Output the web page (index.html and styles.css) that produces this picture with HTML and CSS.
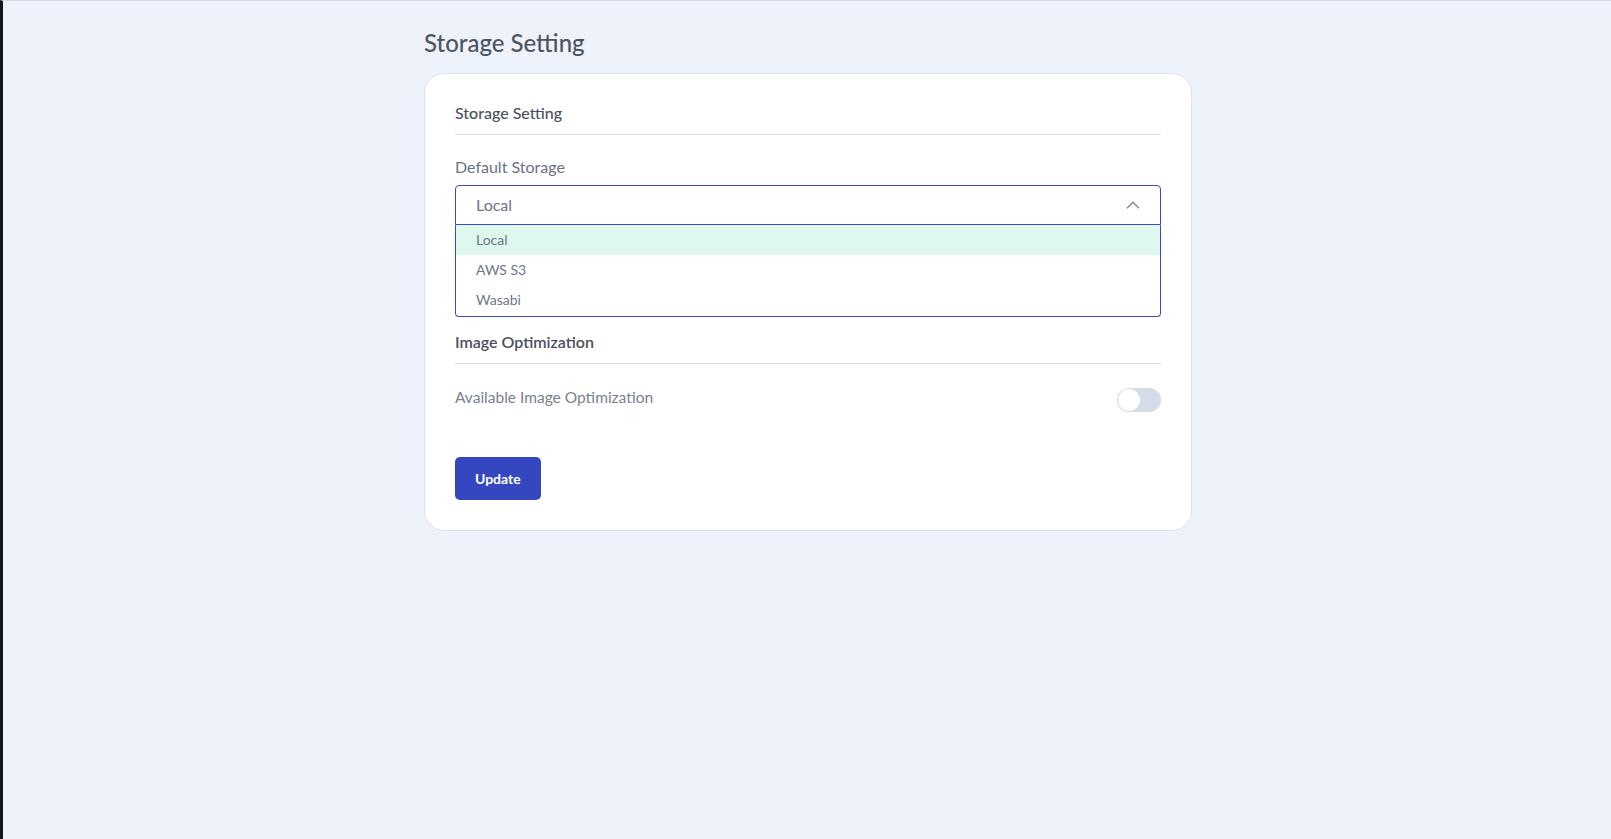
FILE: index.html
```html
<!DOCTYPE html>
<html lang="en">
<head>
<meta charset="utf-8">
<title>Storage Setting</title>
<link rel="stylesheet" href="styles.css">
</head>
<body>
<main class="page">
  <h1 class="page-title">Storage Setting</h1>
  <section class="card">
    <h2 class="section-title first">Storage Setting</h2>
    <div class="field">
      <label class="field-label">Default Storage</label>
      <div class="select open">
        <div class="select-control">
          <span class="select-value">Local</span>
          <svg class="chevron" width="14" height="8" viewBox="0 0 14 8" aria-hidden="true"><path d="M1 7.2 L7 1.2 L13 7.2" fill="none" stroke="#7d8597" stroke-width="1.3"/></svg>
        </div>
        <ul class="select-menu">
          <li class="option active">Local</li>
          <li class="option">AWS S3</li>
          <li class="option">Wasabi</li>
        </ul>
      </div>
    </div>
    <h2 class="section-title second">Image Optimization</h2>
    <div class="toggle-row">
      <span class="toggle-label">Available Image Optimization</span>
      <span class="toggle"><span class="knob"></span></span>
    </div>
    <button class="btn-primary" type="button">Update</button>
  </section>
</main>
</body>
</html>
```
FILE: styles.css
```css
* { box-sizing: border-box; }
html, body { height: 100%; }
body {
  margin: 0;
  padding-left: 2px;
  background: #eef2fa;
  border-left: 3px solid #14141d;
  border-top: 1px solid #d5dbe6;
  font-family: "Lato", "Noto Sans", sans-serif;
  color: #4b5260;
}
.page {
  width: 768px;
  margin: 0 auto;
  padding-top: 27px;
}
.page-title {
  margin: 0 0 15px;
  font-size: 24px;
  line-height: 30px;
  font-weight: 500;
  color: #4d5462;
}
.card {
  background: #fff;
  border: 1px solid #dde2ec;
  border-radius: 20px;
  padding: 27px 30px 30px;
}
.section-title {
  margin: 0;
  font-size: 16px;
  line-height: 24px;
  font-weight: 600;
  color: #4a505d;
  padding-bottom: 9px;
  border-bottom: 1px solid #dadfe8;
}
.section-title.first { font-weight: 500; }
.section-title.second { margin-top: 13px; padding-bottom: 9px; }
.field { margin-top: 20px; }
.field-label {
  display: block;
  font-size: 16px;
  line-height: 24px;
  color: #6b7181;
  margin-bottom: 6px;
}
.select-control {
  height: 40px;
  border: 1px solid #3a4bc4;
  border-radius: 4px 4px 0 0;
  display: flex;
  align-items: center;
  justify-content: space-between;
  padding: 0 20px 2px 20px;
}
.select-value {
  font-size: 16px;
  color: #6d7383;
}
.chevron { display: block; margin-top: 1px; }
.select-menu {
  list-style: none;
  margin: 0;
  padding: 0 0 1px;
  border: 1px solid #3a4bc4;
  border-top: none;
  border-radius: 0 0 4px 4px;
  overflow: hidden;
}
.option {
  height: 30px;
  line-height: 30px;
  padding-left: 20px;
  font-size: 14px;
  color: #6f7585;
}
.option.active { background: #dff8ee; }
.toggle-row {
  display: flex;
  justify-content: space-between;
  align-items: flex-start;
  margin-top: 23px;
}
.toggle-label {
  font-size: 15.5px;
  line-height: 20px;
  color: #7a8090;
}
.toggle {
  width: 44px;
  height: 24px;
  margin-top: 1px;
  border-radius: 12px;
  background: #d5dbe7;
  display: flex;
  align-items: center;
  padding-left: 1px;
}
.knob {
  width: 22px;
  height: 22px;
  border-radius: 50%;
  background: #fff;
  display: block;
}
.btn-primary {
  display: block;
  margin-top: 45px;
  height: 43px;
  padding: 0 20px;
  border: none;
  border-radius: 5px;
  background: #3447c1;
  color: #fff;
  font-family: inherit;
  font-size: 14px;
  font-weight: 700;
  cursor: pointer;
}
```
